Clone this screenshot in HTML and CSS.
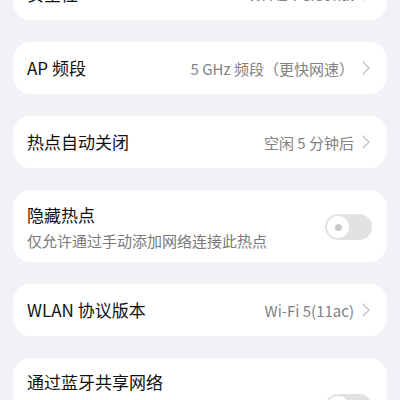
FILE: index.html
```html
<!DOCTYPE html>
<html lang="zh-CN">
<head>
    <meta charset="UTF-8">
    <title>个人热点</title>
    <link rel="stylesheet" href="styles.css">
</head>
<body>
    <div class="settings">
        <div class="card card-first">
            <span class="title">安全性</span>
            <span class="value">WPA2-Personal
                <svg class="chevron" viewBox="0 0 8 14"><path d="M1 1l6 6-6 6"/></svg>
            </span>
        </div>

        <div class="card">
            <span class="title">AP 频段</span>
            <span class="value">5 GHz 频段（更快网速）
                <svg class="chevron" viewBox="0 0 8 14"><path d="M1 1l6 6-6 6"/></svg>
            </span>
        </div>

        <div class="card">
            <span class="title">热点自动关闭</span>
            <span class="value">空闲 5 分钟后
                <svg class="chevron" viewBox="0 0 8 14"><path d="M1 1l6 6-6 6"/></svg>
            </span>
        </div>

        <div class="card card-tall">
            <div class="text">
                <div class="title">隐藏热点</div>
                <div class="desc">仅允许通过手动添加网络连接此热点</div>
            </div>
            <div class="switch"><span class="knob"></span></div>
        </div>

        <div class="card">
            <span class="title">WLAN 协议版本</span>
            <span class="value">Wi-Fi 5(11ac)
                <svg class="chevron" viewBox="0 0 8 14"><path d="M1 1l6 6-6 6"/></svg>
            </span>
        </div>

        <div class="card card-tall">
            <div class="text">
                <div class="title">通过蓝牙共享网络</div>
                <div class="desc">开启后，其他设备可通过蓝牙连接此设备，共享移动网络</div>
            </div>
            <div class="switch"><span class="knob"></span></div>
        </div>
    </div>
</body>
</html>
```

FILE: styles.css
```css
html, body {
    height: 400px;
    overflow: hidden;
}

body {
    margin: 0;
    background: #f1f2f6;
    font-family: "Noto Sans CJK SC", "Noto Sans", sans-serif;
    color: #111111;
}

.settings {
    display: flex;
    flex-direction: column;
    gap: 22px;
    padding: 0 13px;
}

.card {
    display: flex;
    align-items: center;
    justify-content: space-between;
    min-height: 52px;
    box-sizing: border-box;
    padding: 0 17px 0 14px;
    background: #ffffff;
    border-radius: 18px;
}

.card-first {
    margin-top: -32px;
}

.card-tall {
    padding: 12px 15px 10px 14px;
    min-height: 72px;
}

.title {
    font-size: 17px;
    line-height: 24px;
}

.value {
    display: flex;
    align-items: center;
    font-size: 15px;
    color: #828282;
}

.chevron {
    width: 8px;
    height: 14px;
    margin-left: 8px;
    fill: none;
    stroke: #c4c4c4;
    stroke-width: 1.4;
    stroke-linecap: round;
    stroke-linejoin: round;
}

.desc {
    margin-top: 3px;
    font-size: 15px;
    line-height: 22px;
    color: #7a7a7a;
}

.card-tall:last-child .desc {
    margin-top: 6px;
    width: 290px;
}

.switch {
    flex: none;
    width: 47px;
    height: 26px;
    border-radius: 13px;
    background: #e2e2e2;
    display: flex;
    align-items: center;
    padding-left: 2px;
    box-sizing: border-box;
}

.knob {
    width: 22px;
    height: 22px;
    border-radius: 50%;
    background: #ffffff;
    display: flex;
    align-items: center;
    justify-content: center;
}

    .knob::after {
        content: "";
        width: 7px;
        height: 7px;
        border-radius: 50%;
        background: #c9c9c9;
    }
```
